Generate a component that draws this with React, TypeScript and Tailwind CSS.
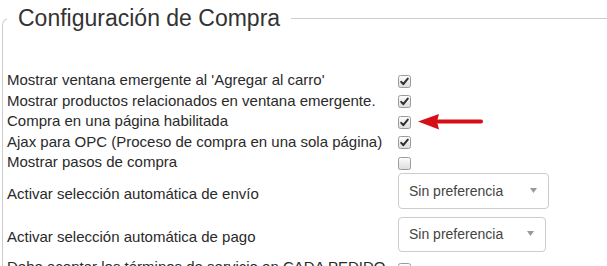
import React from "react";

function Box({ checked }: { checked: boolean }) {
  return (
    <svg width="13" height="13" viewBox="0 0 13 13" className="block">
      <defs>
        <linearGradient id={checked ? "gc" : "gu"} x1="0" y1="0" x2="0" y2="1">
          <stop offset="0" stopColor="#fdfdfd" />
          <stop offset="1" stopColor="#dcdcdc" />
        </linearGradient>
      </defs>
      <rect x="0.5" y="0.5" width="12" height="12" rx="2" fill={`url(#${checked ? "gc" : "gu"})`} stroke="#9c9c9c" />
      {checked && (
        <path d="M3.2 6.8 L5.3 9.2 L9.8 3.6" fill="none" stroke="#2f2f2f" strokeWidth="2" strokeLinecap="round" strokeLinejoin="round" />
      )}
    </svg>
  );
}

function CheckRow({ label, checked, h = "h-[20.5px]", boxMt = "mt-[4.5px]" }: { label: string; checked: boolean; h?: string; boxMt?: string }) {
  return (
    <div className={`flex items-start ${h}`}>
      <div className="w-[391px] shrink-0 leading-[20.5px] whitespace-nowrap">{label}</div>
      <div className={boxMt}>
        <Box checked={checked} />
      </div>
    </div>
  );
}

function SelectRow({ label, w, selH, h }: { label: string; w: string; selH: string; h: string }) {
  return (
    <div className={`flex items-center ${h}`}>
      <div className="w-[391px] shrink-0 leading-[21px] whitespace-nowrap pt-[4px]">{label}</div>
      <div className={`${w} ${selH} border border-[#cccccc] rounded-[4px] bg-white flex items-center justify-between pl-[10px] pr-[11px] text-[14px] text-[#444]`}>
        <span>Sin preferencia</span>
        <svg width="7" height="5" viewBox="0 0 7 5" className="block mb-[2px]">
          <path d="M0 0 H7 L3.5 5 Z" fill="#9a9a9a" />
        </svg>
      </div>
    </div>
  );
}

export default function App() {
  return (
    <div className="w-[607px] h-[266px] overflow-hidden bg-white relative text-[#333] font-['Liberation_Sans',Arial,sans-serif]">
      <fieldset className="ml-[2px] mt-[5px] border-t border-l border-[#cccccc] rounded-tl-[7px] pl-[4px] min-w-0">
        <legend className="px-[11px] text-[23px] leading-[26px] text-[#333]">Configuración de Compra</legend>
        <div className="pt-[39px] text-[15px] text-[#2a2a2a]">
          <CheckRow label="Mostrar ventana emergente al 'Agregar al carro'" checked />
          <CheckRow label="Mostrar productos relacionados en ventana emergente." checked />
          <CheckRow label="Compra en una página habilitada" checked />
          <CheckRow label="Ajax para OPC (Proceso de compra en una sola página)" checked />
          <CheckRow label="Mostrar pasos de compra" checked={false} h="h-[18px]" />
          <SelectRow label="Activar selección automática de envío" w="w-[151px]" selH="h-[36px]" h="h-[42px]" />
          <SelectRow label="Activar selección automática de pago" w="w-[148px]" selH="h-[35px]" h="h-[45px]" />
          <CheckRow label="Debe aceptar los términos de servicio en CADA PEDIDO" checked={false} boxMt="mt-[6px]" />
        </div>
      </fieldset>
      <svg width="68" height="20" viewBox="0 0 68 20" className="absolute left-[417px] top-[111px]">
        <path d="M21 10.5 H64" stroke="#d60f16" strokeWidth="4" strokeLinecap="round" />
        <path d="M1 10.5 L22 3 L20 10.5 L22 18.5 Z" fill="#d60f16" />
      </svg>
    </div>
  );
}
